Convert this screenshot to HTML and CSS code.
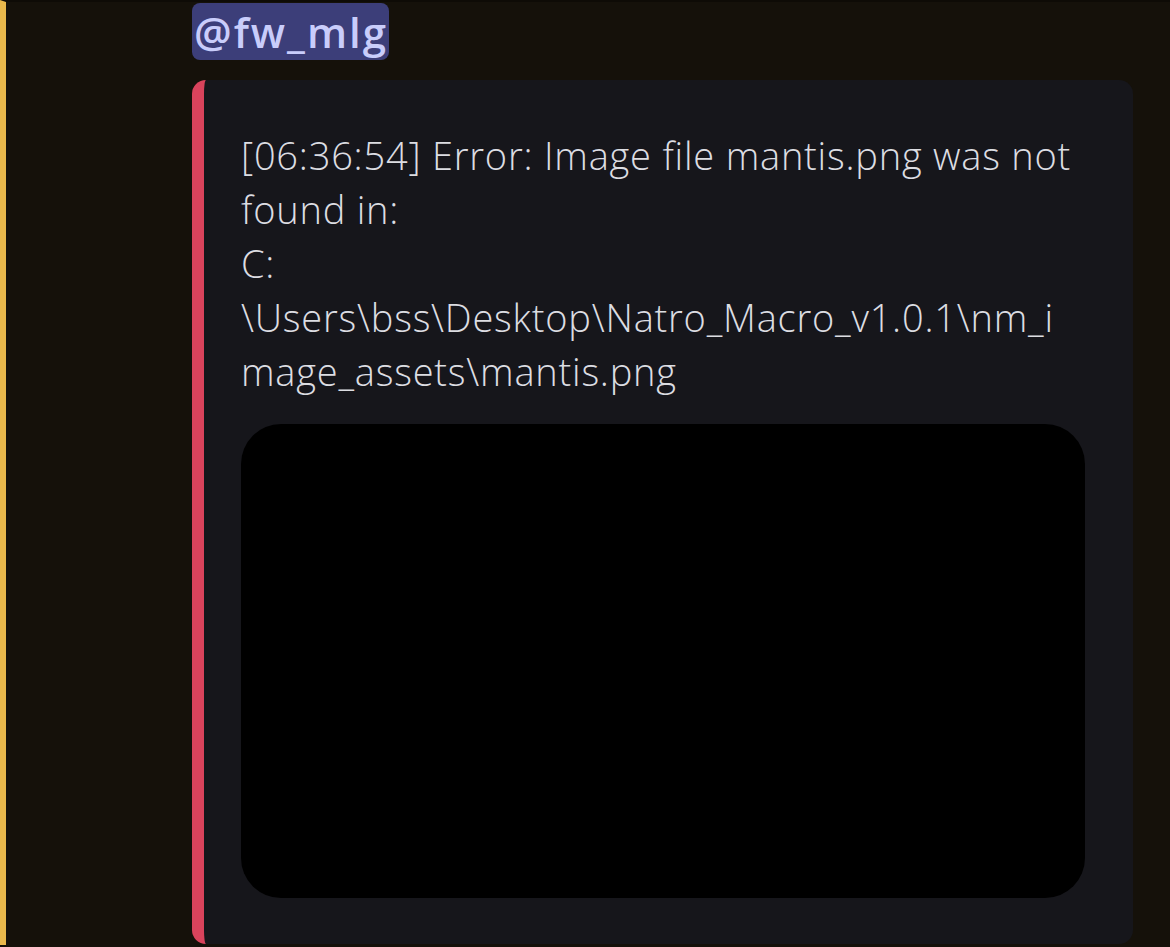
FILE: index.html
```html
<!DOCTYPE html>
<html>
<head>
<meta charset="utf-8">
<link rel="stylesheet" href="styles.css">
</head>
<body>
<div class="message">
  <div class="content">
    <div class="mention-row"><span class="mention">@fw_mlg</span></div>
    <div class="embed">
      <div class="embed-text">[06:36:54] Error: Image file mantis.png was not<br>found in:<br>C:<br>\Users\bss\Desktop\Natro_Macro_v1.0.1\nm_i<br>mage_assets\mantis.png</div>
      <div class="embed-image"></div>
    </div>
  </div>
</div>
</body>
</html>
```

FILE: styles.css
```css
html, body {
  margin: 0;
  padding: 0;
  background: #15110a;
  height: 947px;
  overflow: hidden;
}
.message {
  border-left: 6px solid #e9b84b;
  border-top: 2px solid #0e0b06;
  height: 945px;
  box-sizing: border-box;
  padding-left: 186px;
}
.content {
  width: 941px;
}
.mention-row {
  height: 78px;
  padding-top: 1px;
  box-sizing: border-box;
}
.mention {
  display: inline-block;
  background: #3c3e79;
  color: #c9cdfb;
  font-family: "Open Sans", sans-serif;
  font-weight: 600;
  font-size: 42px;
  line-height: 57px;
  height: 57px;
  padding: 0 1px 0 2px;
  border-radius: 8px;
  letter-spacing: 2px;
}
.embed {
  background: #16161b;
  border-left: 12px solid #d9435c;
  border-radius: 14px;
  padding: 48px 40px 46px 37px;
  box-sizing: border-box;
}
.embed-text {
  color: #dcdde2;
  font-family: "Open Sans", sans-serif;
  font-weight: 300;
  font-size: 38px;
  line-height: 54px;
  letter-spacing: 0.78px;
  white-space: nowrap;
}
.embed-image {
  margin-top: 26px;
  width: 844px;
  height: 474px;
  background: #000;
  border-radius: 40px;
}
```
